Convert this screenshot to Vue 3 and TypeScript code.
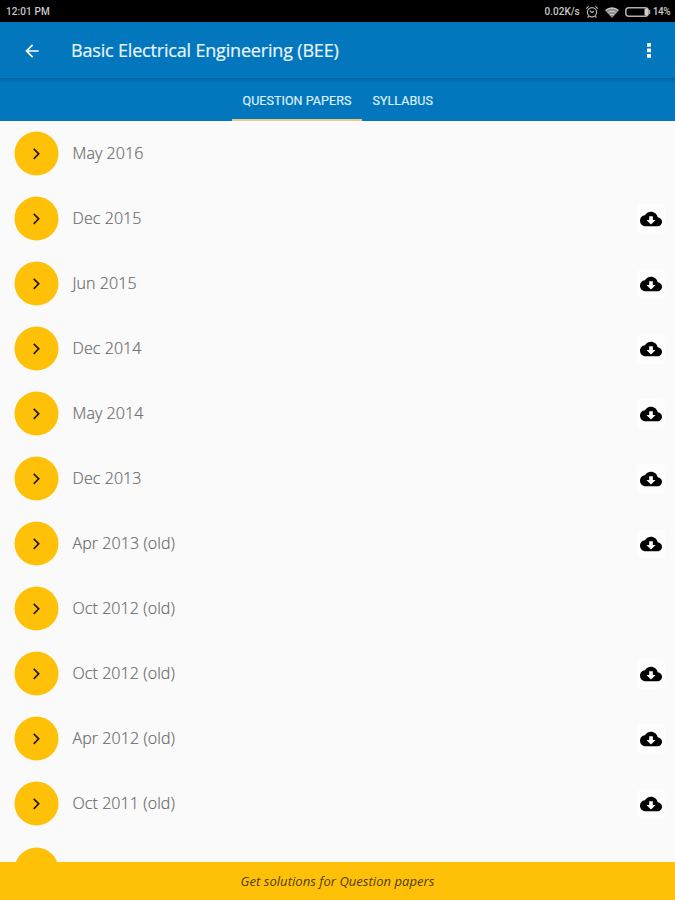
<script setup lang="ts">
interface Paper {
  title: string
  download: boolean
}

const papers: Paper[] = [
  { title: 'May 2016', download: false },
  { title: 'Dec 2015', download: true },
  { title: 'Jun 2015', download: true },
  { title: 'Dec 2014', download: true },
  { title: 'May 2014', download: true },
  { title: 'Dec 2013', download: true },
  { title: 'Apr 2013 (old)', download: true },
  { title: 'Oct 2012 (old)', download: false },
  { title: 'Oct 2012 (old)', download: true },
  { title: 'Apr 2012 (old)', download: true },
  { title: 'Oct 2011 (old)', download: true },
  { title: '', download: false },
]
</script>

<template>
  <div class="screen">
    <div class="status">
      <span class="clock">12:01 PM</span>
      <span class="speed">0.02K/s</span>
      <svg class="alarm" width="14" height="14" viewBox="0 0 14 14" fill="none" stroke="#b4b4b4" stroke-width="1.2">
        <circle cx="7" cy="7.2" r="4.6" />
        <path d="M1.2 3.6 3.6 1.4M12.8 3.6 10.4 1.4M3.8 11 2.6 12.6M10.2 11l1.2 1.6M4.8 5.8 7 7.6l2-1.4" />
      </svg>
      <svg class="wifi" width="14" height="11" viewBox="0 0 14 11">
        <path d="M0 3.2C4-.6 10-.6 14 3.2L7 11Z" fill="#8c8c8c" />
        <path d="M.8 3.6C4.4.4 9.6.4 13.2 3.6M2.8 5.8c2.4-2 6-2 8.4 0M4.8 8c1.3-1 3.1-1 4.4 0" fill="none" stroke="#d4d4d4" stroke-width="1" />
      </svg>
      <svg class="battery" width="26" height="10" viewBox="0 0 26 10">
        <rect x=".8" y=".8" width="22.4" height="8.4" rx="3" fill="none" stroke="#b0b0b0" stroke-width="1.5" />
        <rect x="19.5" y="1.5" width="3.5" height="7" rx="1" fill="#d0d0d0" />
        <path d="M24.5 3v4" stroke="#aaa" stroke-width="1.5" />
      </svg>
      <span class="percent">14%</span>
    </div>
    <header class="appbar">
      <svg class="back" width="20" height="20" viewBox="0 0 24 24" fill="#fff">
        <path d="M20 11H7.830l5.590-5.590L12 4l-8 8 8 8 1.410-1.410L7.830 13H20v-2z" />
      </svg>
      <h1>Basic Electrical Engineering (BEE)</h1>
      <svg class="more" width="4" height="16" viewBox="0 0 4 16" fill="#fff">
        <rect x="0" y="1" width="4" height="3.8" rx=".5" />
        <rect x="0" y="6.5" width="4" height="3.8" rx=".5" />
        <rect x="0" y="12" width="4" height="3.8" rx=".5" />
      </svg>
    </header>
    <nav class="tabs">
      <div class="tab active"><span>QUESTION PAPERS</span></div>
      <div class="tab"><span>SYLLABUS</span></div>
    </nav>
    <main class="list">
      <div v-for="(paper, i) in papers" :key="i" class="row">
        <svg class="dot" width="45" height="45" viewBox="0 0 45 45">
          <circle cx="22.5" cy="22.5" r="22" fill="#ffc107" />
          <path d="m19.7 17.800 5 5-5 5" fill="none" stroke="#241c08" stroke-width="1.700" />
        </svg>
        <span class="title">{{ paper.title }}</span>
        <div v-if="paper.download" class="download">
          <svg width="22" height="22" viewBox="0 0 24 24">
            <path d="M19.350 10.040C18.670 6.590 15.640 4 12 4 9.110 4 6.600 5.640 5.350 8.040 2.340 8.360 0 10.910 0 14c0 3.310 2.690 6 6 6h13c2.760 0 5-2.240 5-5 0-2.640-2.050-4.780-4.650-4.960zM17 13l-5 5-5-5h3V9h4v4h3z" />
          </svg>
        </div>
      </div>
    </main>
    <footer class="banner"><span>Get solutions for Question papers</span></footer>
  </div>
</template>

<style>
body {
  margin: 0;
  overflow: hidden;
}
</style>

<style scoped>
.screen {
  width: 675px;
  height: 900px;
  display: flex;
  flex-direction: column;
  overflow: hidden;
  background: #fafafa;
  font-family: 'Open Sans', sans-serif;
}
.status {
  flex: none;
  height: 22px;
  box-sizing: border-box;
  padding: 2px 5px 0 6px;
  display: flex;
  align-items: center;
  background: #000;
  color: #c8c8c8;
  font: 500 10px/20px Roboto, sans-serif;
  white-space: nowrap;
}
.clock {
  margin-right: auto;
  letter-spacing: .1px;
}
.speed {
  margin-right: 5px;
}
.alarm {
  margin-right: 6px;
}
.wifi {
  margin-right: 6px;
}
.battery {
  margin-right: 2px;
}
.percent {
  letter-spacing: -.5px;
}
.appbar {
  flex: none;
  height: 56px;
  box-sizing: border-box;
  padding: 0 24px 0 22px;
  display: flex;
  align-items: center;
  background: #0277bd;
}
.back {
  margin-top: 1px;
}
.appbar h1 {
  margin: 0 auto 0 29px;
  color: #e9f4fb;
  font-size: 18px;
  font-weight: 400;
  line-height: 24px;
  letter-spacing: -.18px;
  -webkit-text-stroke: .2px #e9f4fb;
  white-space: nowrap;
}
.tabs {
  flex: none;
  height: 42.5px;
  display: flex;
  padding-left: 232px;
  background: linear-gradient(#02629c, #0270b2 3px, #0277bd 5px);
}
.tab {
  box-sizing: border-box;
  padding: 5px 10.5px 0;
  display: flex;
  align-items: center;
  color: #dceffa;
  font: 400 12.5px/16px Roboto, sans-serif;
  letter-spacing: .06px;
  -webkit-text-stroke: .2px #dceffa;
  border-bottom: 2px solid transparent;
  white-space: nowrap;
}
.active {
  width: 130px;
  border-bottom-color: #e9c983;
}
.list {
  flex: 1;
  min-height: 0;
  overflow: hidden;
  padding-top: .5px;
}
.row {
  height: 65.05px;
  box-sizing: border-box;
  padding: 0 10px 0 14px;
  display: flex;
  align-items: center;
}
.dot {
  flex: none;
}
.title {
  margin: 0 auto 1px 13.5px;
  color: #6b6b6b;
  font-size: 16px;
  font-weight: 300;
  line-height: 20px;
  letter-spacing: .08px;
  -webkit-text-stroke: .2px #6b6b6b;
}
.download {
  width: 28px;
  height: 30px;
  margin-top: 1px;
  border-radius: 5px;
  background: #fdfdfd;
  display: flex;
  align-items: center;
  justify-content: center;
}
.banner {
  flex: none;
  height: 38.5px;
  display: flex;
  align-items: center;
  justify-content: center;
  background: #ffc107;
  color: #4f3d0c;
  font-size: 13px;
  font-style: italic;
  letter-spacing: .05px;
}
</style>
